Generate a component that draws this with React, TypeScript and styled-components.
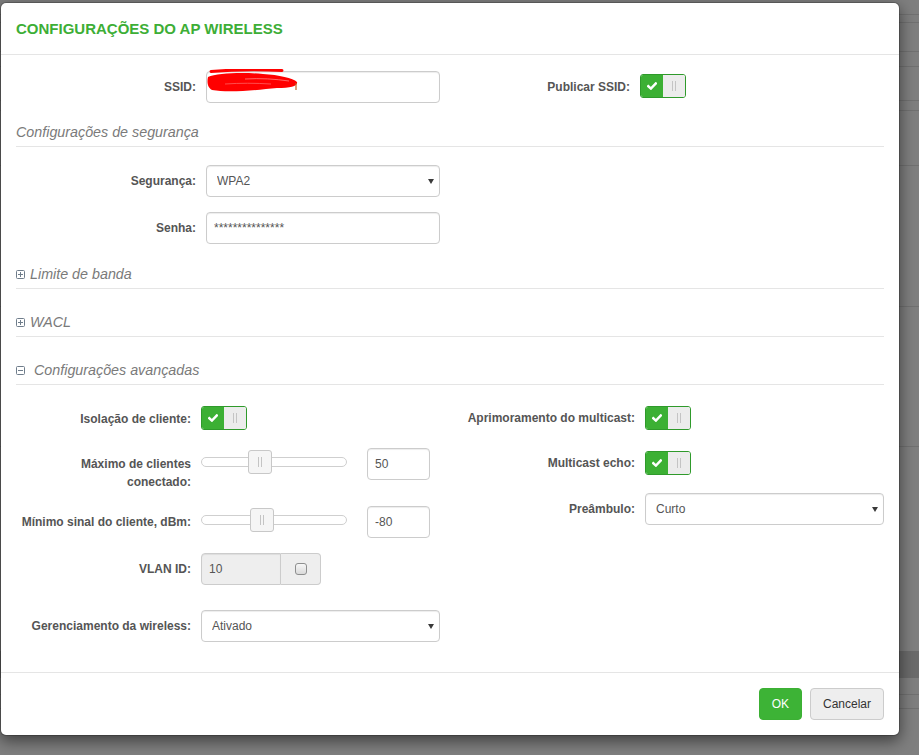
import React from "react";
import styled, { createGlobalStyle } from "styled-components";

const FONT = `"Liberation Sans", Arial, Helvetica, sans-serif`;

const GlobalStyle = createGlobalStyle`
  html, body { margin: 0; padding: 0; }
  body {
    width: 919px;
    height: 755px;
    overflow: hidden;
    background: #7f7f7f;
    font-family: ${FONT};
    font-size: 12px;
    color: #555;
  }
  * { box-sizing: border-box; }
`;

const pageLines = [14, 22, 51, 66, 100, 110, 165, 306, 446, 694, 708];

const Backdrop = styled.div`
  width: 919px;
  height: 755px;
  padding-top: 2px;
  background-color: #7f7f7f;
  background-image: ${pageLines.map(() => "linear-gradient(#717171, #717171)").join(", ")},
    linear-gradient(#6b6b6b, #6b6b6b);
  background-size: ${pageLines.map(() => "100% 1px").join(", ")}, 100% 27px;
  background-position: ${pageLines.map((y) => `0 ${y}px`).join(", ")}, 0 651px;
  background-repeat: no-repeat;
`;

const Modal = styled.div`
  width: 900px;
  background: #fff;
  background-clip: padding-box;
  border: 1px solid rgba(0, 0, 0, 0.2);
  border-radius: 6px;
  box-shadow: 0 5px 15px rgba(0, 0, 0, 0.5);
`;

const Header = styled.div`
  padding: 15px;
  border-bottom: 1px solid #e5e5e5;
`;

const Title = styled.h4`
  margin: 0;
  font-size: 15px;
  line-height: 21px;
  font-weight: bold;
  color: #3dae36;
`;

const Body = styled.div`
  padding: 16px 15px 30px;
`;

const Columns = styled.div<{ $mt?: number }>`
  display: grid;
  grid-template-columns: 424px 424px;
  column-gap: 20px;
  align-items: start;
  margin-top: ${(p) => p.$mt ?? 0}px;
`;

const Column = styled.div`
  display: flex;
  flex-direction: column;
`;

const Field = styled.div<{ $labelWidth: number; $mt?: number; $width?: number }>`
  display: grid;
  grid-template-columns: ${(p) => p.$labelWidth}px 1fr;
  column-gap: 10px;
  align-items: start;
  margin-top: ${(p) => p.$mt ?? 0}px;
  width: ${(p) => (p.$width ? `${p.$width}px` : "auto")};
`;

const Label = styled.label<{ $pt: number }>`
  display: block;
  text-align: right;
  font-weight: bold;
  font-size: 12px;
  line-height: 18px;
  color: #555;
  padding-top: ${(p) => p.$pt}px;
`;

const TextInput = styled.input`
  display: block;
  width: 100%;
  height: 32px;
  margin: 0;
  padding: 0 7px;
  border: 1px solid #ccc;
  border-radius: 4px;
  background: #fff;
  font: 12px ${FONT};
  color: #555;
  box-shadow: inset 0 1px 1px rgba(0, 0, 0, 0.075);
  outline: none;
`;

const NumberInput = styled(TextInput)`
  width: 63px;
  flex: none;
`;

const InputWrap = styled.div`
  position: relative;
`;

const Scribble = styled.svg`
  position: absolute;
  left: -1px;
  top: -2px;
  pointer-events: none;
`;

const SelectWrap = styled.div`
  position: relative;
`;

const NativeSelect = styled.select`
  display: block;
  width: 100%;
  height: 32px;
  margin: 0;
  padding: 0 20px 0 10px;
  border: 1px solid #ccc;
  border-radius: 4px;
  background: #fff;
  font: 12px ${FONT};
  color: #555;
  appearance: none;
  -webkit-appearance: none;
  box-shadow: inset 0 1px 1px rgba(0, 0, 0, 0.075);
  outline: none;
`;

const Caret = styled.span`
  position: absolute;
  right: 6px;
  top: 50%;
  margin-top: -2px;
  width: 0;
  height: 0;
  border-left: 3px solid transparent;
  border-right: 3px solid transparent;
  border-top: 5px solid #3a3a3a;
  pointer-events: none;
`;

const Legend = styled.div<{ $mt: number }>`
  display: flex;
  align-items: center;
  margin-top: ${(p) => p.$mt}px;
  padding-bottom: 4px;
  border-bottom: 1px solid #e5e5e5;
  font-style: italic;
  font-size: 14.3px;
  line-height: 20px;
  color: #7a7a7a;
`;

const ToggleIcon = styled.svg<{ $gap: number }>`
  flex: none;
  margin-right: ${(p) => p.$gap}px;
`;

const SwitchBox = styled.span<{ $mt?: number }>`
  display: flex;
  width: 46px;
  height: 24px;
  margin-top: ${(p) => p.$mt ?? 0}px;
  border: 1px solid #2f9a2b;
  border-radius: 3px;
  overflow: hidden;
`;

const SwitchOn = styled.span`
  width: 22px;
  flex: none;
  display: flex;
  align-items: center;
  justify-content: center;
  background: #3cb034;
`;

const SwitchHandle = styled.span`
  flex: 1;
  display: flex;
  align-items: center;
  justify-content: center;
  background: #ececec;
`;

const Grip = styled.span`
  width: 4px;
  height: 10px;
  border-left: 1px solid #c4c4c4;
  border-right: 1px solid #c4c4c4;
`;

const SliderRow = styled.div`
  display: flex;
  align-items: flex-start;
  gap: 20px;
`;

const Slider = styled.div`
  position: relative;
  width: 146px;
  height: 24px;
  margin-top: 2px;
  flex: none;
`;

const Track = styled.div`
  margin-top: 7px;
  height: 10px;
  border: 1px solid #cfcfcf;
  border-radius: 5px;
  background: #fff;
`;

const Thumb = styled.span`
  position: absolute;
  top: 0;
  width: 24px;
  height: 24px;
  display: flex;
  align-items: center;
  justify-content: center;
  border: 1px solid #c8c8c8;
  border-radius: 3px;
  background: #f5f5f5;
`;

const InputGroup = styled.div`
  display: flex;
  width: 120px;
  height: 32px;
`;

const GroupInput = styled(TextInput)`
  width: 80px;
  flex: none;
  border-radius: 4px 0 0 4px;
  background: #eee;
`;

const Addon = styled.span`
  width: 40px;
  display: flex;
  align-items: center;
  justify-content: center;
  background: #eee;
  border: 1px solid #ccc;
  border-left: none;
  border-radius: 0 4px 4px 0;
`;

const CheckBox = styled.input`
  appearance: none;
  -webkit-appearance: none;
  width: 12px;
  height: 12px;
  margin: 0;
  border: 1px solid #8e8f8f;
  border-radius: 3px;
  background: linear-gradient(#f7f7f7, #dadada);
`;

const Footer = styled.div`
  display: flex;
  justify-content: flex-end;
  gap: 8px;
  padding: 15px;
  border-top: 1px solid #e5e5e5;
`;

const Button = styled.button<{ $primary?: boolean }>`
  height: 32px;
  padding: 0 12px;
  font: 12px ${FONT};
  border-radius: 4px;
  border: 1px solid ${(p) => (p.$primary ? "#3cb034" : "#ccc")};
  background: ${(p) => (p.$primary ? "#3db336" : "#eeeeee")};
  color: ${(p) => (p.$primary ? "#fff" : "#333")};
`;

const CheckMark = () => (
  <svg width="10" height="8" viewBox="0 0 10 8">
    <path d="M1.3 4.2 L3.9 6.6 L8.8 1.4" fill="none" stroke="#fff" strokeWidth="2.4" strokeLinecap="square" />
  </svg>
);

const Switch = ({ mt }: { mt?: number }) => (
  <SwitchBox $mt={mt}>
    <SwitchOn>
      <CheckMark />
    </SwitchOn>
    <SwitchHandle>
      <Grip />
    </SwitchHandle>
  </SwitchBox>
);

const SLIDER_W = 146;
const THUMB_W = 24;

const RangeSlider = ({ value, min, max }: { value: number; min: number; max: number }) => {
  const left = Math.round(((value - min) / (max - min)) * (SLIDER_W - THUMB_W));
  return (
    <Slider>
      <Track />
      <Thumb style={{ left }}>
        <Grip />
      </Thumb>
    </Slider>
  );
};

const Select = ({ value, options }: { value: string; options: string[] }) => (
  <SelectWrap>
    <NativeSelect defaultValue={value}>
      {options.map((o) => (
        <option key={o}>{o}</option>
      ))}
    </NativeSelect>
    <Caret />
  </SelectWrap>
);

const Toggler = ({ open, gap }: { open: boolean; gap: number }) => (
  <ToggleIcon $gap={gap} width="9" height="9" viewBox="0 0 9 9">
    <rect x="0.5" y="0.5" width="8" height="8" rx="1" fill="none" stroke="#6f7d8b" strokeWidth="1" />
    <path d="M2 4.5 H7" stroke="#6f7d8b" strokeWidth="1" />
    {!open && <path d="M4.5 2 V7" stroke="#6f7d8b" strokeWidth="1" />}
  </ToggleIcon>
);

const RED = "#ff0000";

const Redaction = () => (
  <Scribble width="100" height="28" viewBox="0 0 100 28">
    <path d="M6 2.5 C 30 0.5, 55 0.5, 77 1.5" fill="none" stroke={RED} strokeWidth="3" strokeLinecap="round" />
    <path
      d="M3 8 C 12 4, 38 3, 58 5 C 74 6, 88 9, 92 13 C 93 17, 86 19, 72 19 C 52 21, 24 24, 7 21 C 2 18, 2 12, 3 8 Z"
      fill={RED}
    />
    <path d="M40 10 C 55 9, 70 10, 84 12" fill="none" stroke="#ff8080" strokeWidth="0.8" />
    <path d="M20 15 C 35 14, 50 14, 66 15" fill="none" stroke="#ff6060" strokeWidth="0.8" />
    <path d="M91 14 V21" fill="none" stroke="#c06020" strokeWidth="1.2" />
  </Scribble>
);

export default function App() {
  return (
    <>
      <GlobalStyle />
      <Backdrop>
        <Modal>
          <Header>
            <Title>CONFIGURAÇÕES DO AP WIRELESS</Title>
          </Header>
          <Body>
            <Columns>
              <Field $labelWidth={180}>
                <Label $pt={7}>SSID:</Label>
                <InputWrap>
                  <TextInput type="text" defaultValue="" />
                  <Redaction />
                </InputWrap>
              </Field>
              <Field $labelWidth={170}>
                <Label $pt={7}>Publicar SSID:</Label>
                <Switch mt={3} />
              </Field>
            </Columns>

            <Legend $mt={19}>Configurações de segurança</Legend>

            <Field $labelWidth={180} $mt={18} $width={424}>
              <Label $pt={7}>Segurança:</Label>
              <Select value="WPA2" options={["WPA2", "WPA", "WPA/WPA2", "Nenhuma"]} />
            </Field>
            <Field $labelWidth={180} $mt={15} $width={424}>
              <Label $pt={7}>Senha:</Label>
              <TextInput type="text" defaultValue="***************" />
            </Field>

            <Legend $mt={20}>
              <Toggler open={false} gap={5} />
              Limite de banda
            </Legend>
            <Legend $mt={23}>
              <Toggler open={false} gap={5} />
              WACL
            </Legend>
            <Legend $mt={23}>
              <Toggler open={true} gap={9} />
              Configurações avançadas
            </Legend>

            <Columns>
              <Column>
                <Field $labelWidth={175} $mt={21}>
                  <Label $pt={4}>Isolação de cliente:</Label>
                  <Switch />
                </Field>
                <Field $labelWidth={175} $mt={18}>
                  <Label $pt={7}>
                    Máximo de clientes
                    <br />
                    conectado:
                  </Label>
                  <SliderRow>
                    <RangeSlider value={50} min={1} max={128} />
                    <NumberInput type="text" defaultValue="50" />
                  </SliderRow>
                </Field>
                <Field $labelWidth={175} $mt={15}>
                  <Label $pt={7}>Mínimo sinal do cliente, dBm:</Label>
                  <SliderRow>
                    <RangeSlider value={-80} min={-100} max={-50} />
                    <NumberInput type="text" defaultValue="-80" />
                  </SliderRow>
                </Field>
                <Field $labelWidth={175} $mt={15}>
                  <Label $pt={7}>VLAN ID:</Label>
                  <InputGroup>
                    <GroupInput type="text" defaultValue="10" disabled />
                    <Addon>
                      <CheckBox type="checkbox" />
                    </Addon>
                  </InputGroup>
                </Field>
                <Field $labelWidth={175} $mt={25}>
                  <Label $pt={7}>Gerenciamento da wireless:</Label>
                  <Select value="Ativado" options={["Ativado", "Desativado"]} />
                </Field>
              </Column>
              <Column>
                <Field $labelWidth={175} $mt={21}>
                  <Label $pt={3}>Aprimoramento do multicast:</Label>
                  <Switch />
                </Field>
                <Field $labelWidth={175} $mt={21}>
                  <Label $pt={3}>Multicast echo:</Label>
                  <Switch />
                </Field>
                <Field $labelWidth={175} $mt={18}>
                  <Label $pt={7}>Preâmbulo:</Label>
                  <Select value="Curto" options={["Curto", "Longo"]} />
                </Field>
              </Column>
            </Columns>
          </Body>
          <Footer>
            <Button $primary>OK</Button>
            <Button>Cancelar</Button>
          </Footer>
        </Modal>
      </Backdrop>
    </>
  );
}
